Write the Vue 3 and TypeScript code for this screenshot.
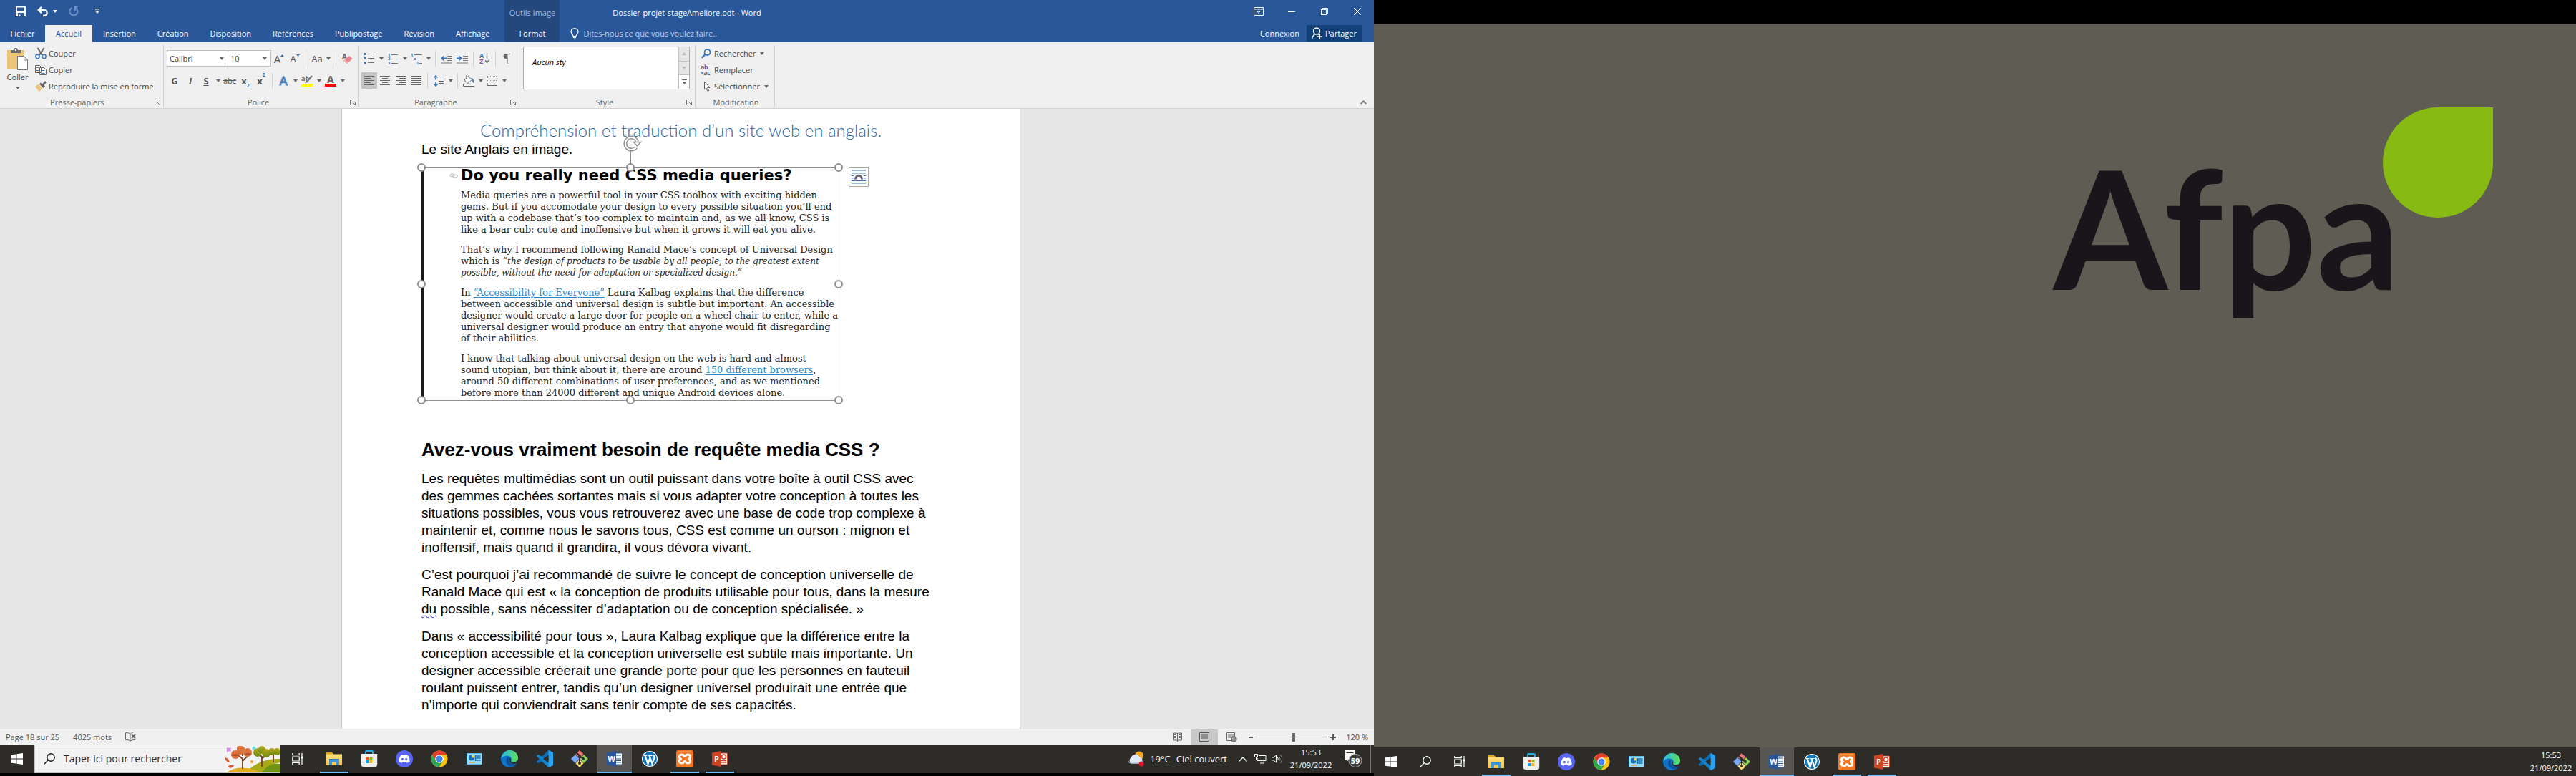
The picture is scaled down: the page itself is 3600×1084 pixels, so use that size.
<script setup lang="ts">
import { ref } from 'vue'

interface App { id: string; label: string; state?: 'open' | 'active'; letter?: string }

const tabs = ['Insertion', 'Création', 'Disposition', 'Références', 'Publipostage', 'Révision', 'Affichage']

const apps: App[] = [
  { id: 'explorer', label: 'Explorateur', state: 'open' },
  { id: 'store', label: 'Store' },
  { id: 'discord', label: 'Discord' },
  { id: 'chrome', label: 'Chrome' },
  { id: 'panel', label: 'Panneau' },
  { id: 'edge', label: 'Edge' },
  { id: 'vscode', label: 'Code' },
  { id: 'git', label: 'Git' },
  { id: 'word', label: 'Word', state: 'active', letter: 'W' },
  { id: 'wordpress', label: 'WordPress' },
  { id: 'xampp', label: 'XAMPP', state: 'open' },
  { id: 'ppt', label: 'PowerPoint', state: 'open', letter: 'P' },
]

const handles = ['nw', 'n', 'ne', 'w', 'e', 'sw', 's', 'se']

const firstParagraph = [
  'Les requêtes multimédias sont un outil puissant dans votre boîte à outil CSS avec',
  'des gemmes cachées sortantes mais si vous adapter votre conception à toutes les',
  'situations possibles, vous vous retrouverez avec une base de code trop complexe à',
  'maintenir et, comme nous le savons tous, CSS est comme un ourson : mignon et',
  'inoffensif, mais quand il grandira, il vous dévora vivant.',
]

const lastParagraph = [
  'Dans « accessibilité pour tous », Laura Kalbag explique que la différence entre la',
  'conception accessible et la conception universelle est subtile mais importante. Un',
  'designer accessible créerait une grande porte pour que les personnes en fauteuil',
  'roulant puissent entrer, tandis qu’un designer universel produirait une entrée que',
  'n’importe qui conviendrait sans tenir compte de ses capacités.',
]

const font = ref('Calibri')
const size = ref('10')
const zoom = ref(53)
</script>

<template>
  <div class="desktop">
    <svg class="defs" width="0" height="0" aria-hidden="true">
      <defs>
        <linearGradient id="gEdge" x1="0" y1="0" x2="1" y2="0"><stop offset="0" stop-color="#2bb7e8" /><stop offset="1" stop-color="#5be05a" /></linearGradient>
        <linearGradient id="gFold" x1="0" y1="0" x2="0" y2="1"><stop offset="0" stop-color="#ffdf7c" /><stop offset="1" stop-color="#f7c145" /></linearGradient>
        <linearGradient id="gLeaf" x1="0" y1="0" x2="0" y2="1"><stop offset="0" stop-color="#b9a81c" /><stop offset="1" stop-color="#6d8a12" /></linearGradient>
      </defs>
      <symbol id="win" viewBox="0 0 16 16"><path fill="#fff" d="M0 2.3 6.6 1.4V7.6H0zM7.4 1.3 16 0V7.6H7.4zM0 8.4H6.6V14.6L0 13.7zM7.4 8.4H16V16L7.4 14.7z" /></symbol>
      <symbol id="lens" viewBox="0 0 16 16"><g fill="none" stroke="currentColor" stroke-width="1.4"><circle cx="10" cy="6" r="5.2" /><path d="M6.2 9.8 .6 15.4" /></g></symbol>
      <symbol id="taskview" viewBox="0 0 16 16"><g fill="none" stroke="#fff" stroke-width="1.2"><path d="M.8 0v2.6H10.200V0M.8 16v-2.600H10.200V16M.8 5h9.400v6H.8zM14 0v16" /></g><path fill="#fff" d="M12.500 4.500h3v3h-3z" /></symbol>
      <symbol id="explorer" viewBox="0 0 24 24"><path fill="#e0a21b" d="M1 3h8l2 2v4H1z" /><path fill="url(#gFold)" d="M1 5.500h22V21H1z" /><path fill="#3e97d6" d="M5 12h14v9h-4v-4.500h-6V21H5z" /><path fill="#2378b8" d="M5 12h14v1.200H5z" /></symbol>
      <symbol id="store" viewBox="0 0 24 24"><path fill="none" stroke="#29a9e8" stroke-width="2" d="M7 6V2.200Q7 1 8.200 1h7.600Q17 1 17 2.200V6" /><path fill="#f0f0f0" d="M.8 5h22.400v15q0 3-3 3H3.800q-3 0-3-3z" /><path fill="#f25022" d="M7.500 9h4v4h-4z" /><path fill="#7fba00" d="M12.500 9h4v4h-4z" /><path fill="#00a4ef" d="M7.500 14h4v4h-4z" /><path fill="#ffb900" d="M12.500 14h4v4h-4z" /></symbol>
      <symbol id="discord" viewBox="0 0 24 24"><circle cx="12" cy="12" r="12" fill="#5865f2" /><path fill="#fff" d="M6.700 7.400q2-1.200 3.700-1.300l.5 1h2.200l.5-1q1.700.1 3.700 1.300 2.500 4 2.200 8.400-2 1.600-4 2l-1-1.700q-2.500.6-5 0l-1 1.700q-2-.4-4-2-.3-4.400 2.200-8.400z" /><ellipse cx="9.400" cy="12.500" rx="1.500" ry="1.800" fill="#5865f2" /><ellipse cx="14.600" cy="12.500" rx="1.500" ry="1.800" fill="#5865f2" /></symbol>
      <symbol id="chrome" viewBox="0 0 24 24"><circle cx="12" cy="12" r="11.500" fill="#fbc116" /><path fill="#e33b2e" d="M2 6.300A11.500 11.500 0 0 1 22 6.300H12L7.100 14.800z" /><path fill="#2da94f" d="M2 6.300A11.500 11.500 0 0 0 11.700 23.500L16.900 14.800H7.100z" /><circle cx="12" cy="12" r="5.700" fill="#fff" /><circle cx="12" cy="12" r="4.500" fill="#3f83ee" /></symbol>
      <symbol id="panel" viewBox="0 0 24 24"><path fill="#56bdf0" d="M1 4h22v16H1z" /><path fill="#9adcf9" d="M2 5h20v14H2z" /><circle cx="8" cy="10.500" r="4" fill="#1372b8" /><path fill="#ffd34d" d="M8 10.500V6.500a4 4 0 0 1 4 4z" /><g stroke="#1372b8" stroke-width="1.500"><path d="M14.500 8h6M14.500 11h6M14.500 14h6M13.500 7v8" /></g><path stroke="#e9a11b" stroke-width="1.500" d="M4 17h9" /></symbol>
      <symbol id="edge" viewBox="0 0 24 24"><circle cx="12" cy="12" r="12" fill="#0f74c9" /><path fill="url(#gEdge)" d="M1 8.500C3.500 2.500 8 0 12.500 0 19 0 24 5 24 10.500c0 4-3 6-6.500 6-3 0-4-1.300-3.500-2.500 2-3-.5-6.500-5-6.500C5 7.500 2 9.500.3 12z" /><path fill="#0a4f9e" d="M9 9.500c-4 4.500-1 12 5 12.700 3 .2 6-1.200 7.700-3.400-5 2-10.400-.5-11-5-.2-1.800.3-3 .8-3.800z" /><path fill="#2d2c29" d="M12.500 10.600c1.800 1 2.400 2 1.500 3.600-.4 1 .9 2.400 3.500 2.400 2 0 4-.7 5.300-2.100l1.700 0-.5 3.500-4.500 1c-4 .5-7.500-2-7.300-5.200z" /></symbol>
      <symbol id="vscode" viewBox="0 0 24 24"><path fill="#0d6cb4" d="M17.500 0 24 3v4L3 18 .5 16z" /><path fill="#1283cd" d="M.5 8 3 6l21 11v4l-6.500 3z" /><path fill="#2aa3f0" d="M17.500 0 24 3v18l-6.500 3z" /><path fill="#2d2c29" d="m17.500 6.500v11L10 12z" /></symbol>
      <symbol id="git" viewBox="0 0 24 24"><path fill="#f07a78" d="m12 0 5.500 5.500L12 11 6.500 5.500z" /><path fill="#7ba7f7" d="m6 6 5.500 5.500L6 18 0 12z" /><path fill="#8fd15c" d="m18 6 6 6-6 6-5.500-6z" /><path fill="#ffe37a" d="m12 12.500 5.500 6L12 24l-5.500-5.500z" /><path stroke="#2d2c29" stroke-width="2" fill="none" d="M8 3.500 12 8v10M12 8l5 4" /><circle cx="12" cy="8" r="2" fill="#2d2c29" /><circle cx="12" cy="18" r="2" fill="#2d2c29" /><circle cx="17" cy="12" r="2" fill="#2d2c29" /></symbol>
      <symbol id="word" viewBox="0 0 24 24"><path fill="#fff" stroke="#2a5699" d="M11 4h11.500v16H11z" /><path stroke="#2a5699" stroke-width="1.200" d="M13 7h8M13 9.500h8M13 12h8M13 14.500h8M13 17h8" /><path fill="#2a5699" d="M1 3.500 14 1v22L1 20.500z" /></symbol>
      <symbol id="ppt" viewBox="0 0 24 24"><path fill="#fff" stroke="#d04423" d="M11 4h11.500v16H11z" /><circle cx="17.500" cy="9" r="3" fill="none" stroke="#d04423" stroke-width="1.500" /><path stroke="#d04423" stroke-width="1.300" d="M14 14.500h7M14 17h7" /><path fill="#d04423" d="M1 3.500 14 1v22L1 20.500z" /></symbol>
      <symbol id="wordpress" viewBox="0 0 24 24"><circle cx="12" cy="12" r="11" fill="#fff" /><circle cx="12" cy="12" r="10" fill="#0f74b8" /><path fill="none" stroke="#fff" stroke-width="2.200" d="M5.500 7.500 9.500 19l3-9-1-2.500M12 9l3.500 10 3-8.500q.3-2-1.500-4" /><path stroke="#fff" stroke-width="1.200" d="M3.500 7.500h5M10 7.500h5.500" /></symbol>
      <symbol id="xampp" viewBox="0 0 24 24"><rect width="24" height="24" rx="2.500" fill="#f37623" /><path fill="#f9a468" d="M3 1.500h18v1.500H3z" /><path fill="none" stroke="#fff" stroke-width="3" stroke-linejoin="round" d="M8.500 6C3 6 4 11 6.500 12 4 13 3 18 8.500 18c2.500 0 1.500-2.500 3.500-2.500s1 2.500 3.500 2.500c5.500 0 4.500-5 2-6 2.500-1 3.500-6-2-6-2.500 0-1.500 2.500-3.500 2.500S11 6 8.500 6z" /></symbol>
    </svg>

    <section class="screen left">
      <div class="window">
        <header class="titlebar">
          <div class="qat">
            <button class="tool" aria-label="Enregistrer"><svg width="14" height="14" viewBox="0 0 14 14"><path fill="#fff" fill-rule="evenodd" d="M0 0h14v14H0zM2 1.500v5h10v-5zM3 9v5h2v-2.500h1.500V14H11V9z" /></svg></button>
            <button class="tool split" aria-label="Annuler"><svg width="15" height="14" viewBox="0 0 15 14"><path fill="none" stroke="#fff" stroke-width="2.400" d="M6 .8 1.800 5 6 9.200M2 5h7.500c5.500 0 5.500 8 0 8H8" /></svg><i class="caret light"></i></button>
            <button class="tool" aria-label="Rétablir"><svg width="14" height="14" viewBox="0 0 14 14"><path fill="none" stroke="#6f90c2" stroke-width="2" d="M4.500 1.800A5.600 5.600 0 1 0 10 2.200M8 .8h4.500M9 1v5" /></svg></button>
            <button class="tool" aria-label="Personnaliser"><svg width="6" height="8" viewBox="0 0 6 8"><path fill="#fff" d="M0 0h6v1.500H0zM0 3.500h6L3 7z" /></svg></button>
          </div>
          <h1 class="doc-title">Dossier-projet-stageAmeliore.odt - Word</h1>
          <div class="win-btns">
            <button aria-label="Options du ruban"><svg width="14" height="12" viewBox="0 0 14 12"><path fill="none" stroke="#fff" d="M.5.500h13v11H.5zM.5 3h13M7 10V5M5 7l2-2 2 2" /></svg></button>
            <button aria-label="Réduire"><svg width="10" height="12" viewBox="0 0 10 12"><path stroke="#fff" d="M0 6.500h10" /></svg></button>
            <button aria-label="Restaurer"><svg width="10" height="12" viewBox="0 0 10 12"><path fill="none" stroke="#fff" d="M.5 3.500h7v7h-7zM2.500 3.500v-2h7v7h-2" /></svg></button>
            <button aria-label="Fermer"><svg width="10" height="12" viewBox="0 0 10 12"><path fill="none" stroke="#fff" d="m0 1 10 10M10 1 0 11" /></svg></button>
          </div>
        </header>

        <nav class="tabs">
          <button class="tab file">Fichier</button>
          <button class="tab on">Accueil</button>
          <button v-for="t in tabs" :key="t" class="tab">{{ t }}</button>
          <div class="context"><span>Outils Image</span><button class="tab">Format</button></div>
          <label class="tell"><svg width="12" height="16" viewBox="0 0 12 16"><path fill="none" stroke="#fff" stroke-width="1.200" d="M4 11.500C4 9 1 8.500 1 5.500a5 5 0 0 1 10 0c0 3-3 3.500-3 6zM4 13.500h4M4.500 15.300h3" /></svg><input type="text" aria-label="Rechercher une commande" placeholder="Dites-nous ce que vous voulez faire.." /></label>
          <button class="tab connect">Connexion</button>
          <button class="share"><svg width="15" height="17" viewBox="0 0 15 17"><g fill="none" stroke="#fff" stroke-width="1.400"><circle cx="7" cy="5.500" r="4.500" /><path d="M.7 16.500c0-3.500 1.500-5.500 4-6.700M9 9l1 1.500M7.500 13H15M11.300 9.500v7" /></g></svg>Partager</button>
        </nav>

        <div class="ribbon">
          <section class="group clip">
            <div class="body row">
              <button class="paste">
                <svg width="29" height="31" viewBox="0 0 29 31"><path fill="#edc57a" d="M0 3h24v26H0z" /><path fill="#6a6a6a" d="M5 7V3h4q0-3 3-3t3 3h4v4z" /><circle cx="12" cy="3" r="1.200" fill="#fff" /><path fill="#fff" stroke="#777" d="M14.500 11.500h9l5 5.500v13.500h-14zM23.500 11.500V17h5" /></svg>
                <span>Coller</span><i class="caret"></i>
              </button>
              <div class="stack">
                <button class="cmd"><svg width="16" height="16" viewBox="0 0 16 16"><path stroke="#666" stroke-width="2" d="M3.500 0 10 10M12.500 0 6 10" /><g fill="none" stroke="#3a75b8" stroke-width="1.400"><circle cx="3.500" cy="12" r="2.700" /><circle cx="12.500" cy="12" r="2.700" /></g></svg>Couper</button>
                <button class="cmd"><svg width="16" height="16" viewBox="0 0 16 16"><g fill="#fff" stroke="#666"><path d="M.5 1.500h6l2 2v8h-8zM6.500 4.500h6l3 3v7h-9z" /></g><path stroke="#3a75b8" d="M2 4.500h3M2 6.500h3M2 8.500h3M8.500 8.500h5M8.500 10.500h5M8.500 12.500h5" /></svg>Copier</button>
                <button class="cmd"><svg width="16" height="16" viewBox="0 0 16 16"><path fill="#edc57a" d="M0 8 5 4.500l5 6L6 15z" /><path fill="#666" d="M6 4.500 8 2.500l2 2L14 0l2 2-3.500 4 1.500 1.500-2.500 2.500z" /></svg>Reproduire la mise en forme</button>
              </div>
            </div>
            <footer><span>Presse-papiers</span><svg class="launch" viewBox="0 0 8 8"><path fill="none" stroke="#777" d="M.5 7V.5H7M3 3l4 4M7.500 3.500v4h-4" /></svg></footer>
          </section>

          <section class="group police">
            <div class="body rows">
              <div class="row">
                <label class="combo wide"><select v-model="font" aria-label="Police"><option>Calibri</option></select><i class="caret"></i></label>
                <label class="combo"><select v-model="size" aria-label="Taille"><option>10</option></select><i class="caret"></i></label>
                <button class="tool big">A<svg width="5" height="12" viewBox="0 0 5 12"><path fill="#3a75b8" d="M0 3h5L2.500 0z" /></svg></button>
                <button class="tool">A<svg width="5" height="12" viewBox="0 0 5 12"><path fill="#3a75b8" d="M0 0h5L2.500 3z" /></svg></button>
                <i class="sep"></i>
                <button class="tool split">Aa<i class="caret"></i></button>
                <i class="sep"></i>
                <button class="tool" aria-label="Effacer"><svg width="15" height="16" viewBox="0 0 15 16"><text x="0" y="9" font-size="10" class="glyph" fill="#666">A</text><path fill="#e8848f" d="m2 11 8-7 4.500 4-7.500 7z" /><path fill="#f4b6bc" d="m2 11 2-1.700 5 4L7 15z" /></svg></button>
              </div>
              <div class="row">
                <button class="tool b">G</button>
                <button class="tool b it">I</button>
                <button class="tool b un">S</button><i class="drop"><i class="caret"></i></i>
                <button class="tool st">abc</button>
                <button class="tool b">x<sub>2</sub></button>
                <button class="tool b">x<sup>2</sup></button>
                <i class="sep"></i>
                <button class="tool glow">A</button><i class="drop"><i class="caret"></i></i>
                <button class="tool" aria-label="Surlignage"><svg width="16" height="17" viewBox="0 0 16 17"><text x="0" y="9" font-size="9" class="glyph" fill="#666">ab</text><path stroke="#777" stroke-width="2.500" d="M15 2 8 10" /><path fill="#777" d="m5 12 2-4 3 3z" /><path fill="#ff0" d="M0 13h16v4H0z" /></svg></button><i class="drop"><i class="caret"></i></i>
                <button class="tool" aria-label="Couleur"><svg width="16" height="17" viewBox="0 0 16 17"><text x="3" y="12" font-size="14" class="glyph" fill="#666">A</text><path fill="#f00" d="M0 13h16v4H0z" /></svg></button><i class="drop"><i class="caret"></i></i>
              </div>
            </div>
            <footer><span>Police</span><svg class="launch" viewBox="0 0 8 8"><path fill="none" stroke="#777" d="M.5 7V.5H7M3 3l4 4M7.500 3.500v4h-4" /></svg></footer>
          </section>

          <section class="group para">
            <div class="body rows">
              <div class="row">
                <button class="tool" aria-label="Puces"><svg width="14" height="15" viewBox="0 0 14 15"><path stroke="#777" d="M5 1.500h9M5 7.500h9M5 13.500h9" /><path fill="#3a75b8" d="M0 0h3v3H0zM0 6h3v3H0zM0 12h3v3H0z" /></svg></button><i class="drop"><i class="caret"></i></i>
                <button class="tool" aria-label="Numérotation"><svg width="14" height="16" viewBox="0 0 14 16"><path stroke="#777" d="M5 2.500h9M5 8.500h9M5 14.500h9" /><g font-size="6" class="glyph" fill="#3a75b8"><text y="5">1</text><text y="10">2</text><text y="16">3</text></g></svg></button><i class="drop"><i class="caret"></i></i>
                <button class="tool" aria-label="Liste à plusieurs niveaux"><svg width="16" height="16" viewBox="0 0 16 16"><path stroke="#777" d="M5 2.500h11M9 8.500h7M12 14.500h4" /><g font-size="6" class="glyph" fill="#3a75b8"><text y="5">1</text><text x="4" y="10">a</text><text x="9" y="16">i</text></g></svg></button><i class="drop"><i class="caret"></i></i>
                <i class="sep"></i>
                <button class="tool" aria-label="Diminuer le retrait"><svg width="16" height="14" viewBox="0 0 16 14"><path stroke="#777" d="M0 .5h16M9 3.500h7M9 6.500h7M9 9.500h7M0 13h16" /><path fill="#3a75b8" d="M0 6.500 4 3v2.500h4v2H4V10z" /></svg></button>
                <button class="tool" aria-label="Augmenter le retrait"><svg width="16" height="14" viewBox="0 0 16 14"><path stroke="#777" d="M0 .5h16M9 3.500h7M9 6.500h7M9 9.500h7M0 13h16" /><path fill="#3a75b8" d="M8 6.500 4 3v2.500H0v2h4V10z" /></svg></button>
                <i class="sep"></i>
                <button class="tool" aria-label="Trier"><svg width="14" height="17" viewBox="0 0 14 17"><text y="8" font-size="9" class="glyph" fill="#3a75b8">A</text><text y="16" font-size="9" class="glyph" fill="#8a4fa8">Z</text><path fill="none" stroke="#666" stroke-width="1.300" d="M10.500 1v13M8 11.500l2.500 3 2.500-3" /></svg></button>
                <i class="sep"></i>
                <button class="tool" aria-label="Afficher tout"><svg width="10" height="14" viewBox="0 0 10 14"><path fill="#666" d="M4 0h6v1H9v13H8V1H6.500v13h-1V7H4A3.500 3.500 0 0 1 4 0z" /></svg></button>
              </div>
              <div class="row">
                <button class="tool picked" aria-label="Gauche"><svg width="14" height="13" viewBox="0 0 14 13"><path stroke="#666" d="M0 .5h14M0 3.500h9M0 6.500h14M0 9.500h9M0 12.500h14" /></svg></button>
                <button class="tool" aria-label="Centrer"><svg width="14" height="13" viewBox="0 0 14 13"><path stroke="#666" d="M0 .5h14M3 3.500h8M0 6.500h14M3 9.500h8M0 12.500h14" /></svg></button>
                <button class="tool" aria-label="Droite"><svg width="14" height="13" viewBox="0 0 14 13"><path stroke="#666" d="M0 .5h14M5 3.500h9M0 6.500h14M5 9.500h9M0 12.500h14" /></svg></button>
                <button class="tool" aria-label="Justifier"><svg width="14" height="13" viewBox="0 0 14 13"><path stroke="#666" d="M0 .5h14M0 3.500h14M0 6.500h14M0 9.500h14M0 12.500h14" /></svg></button>
                <i class="sep"></i>
                <button class="tool" aria-label="Interligne"><svg width="14" height="16" viewBox="0 0 14 16"><path stroke="#666" d="M7 2.500h7M7 5.500h7M7 8.500h7M7 11.500h7" /><path fill="none" stroke="#3a75b8" stroke-width="1.500" d="M3 1v5.500M3 15V9.500M.5 3.500 3 1l2.500 2.500M.5 12.500 3 15l2.500-2.500" /></svg></button><i class="drop"><i class="caret"></i></i>
                <i class="sep"></i>
                <button class="tool" aria-label="Trame de fond"><svg width="16" height="16" viewBox="0 0 16 16"><path fill="#fff" stroke="#666" d="m7 1.500 5.500 5L7 11.500 2 7zM5 4V0M.5 12.500h15v3H.5z" /><path fill="#3a75b8" d="M11 4q5 0 4 7-2-1-2-4z" /></svg></button><i class="drop"><i class="caret"></i></i>
                <button class="tool" aria-label="Bordures"><svg width="14" height="14" viewBox="0 0 14 14"><path fill="none" stroke="#a78fb0" stroke-dasharray="1 1" d="M.5 0v13M6.500 0v13M13.500 0v13M0 .5h14M0 6.500h14" /><path stroke="#666" d="M0 13.500h14" /></svg></button><i class="drop"><i class="caret"></i></i>
              </div>
            </div>
            <footer><span>Paragraphe</span><svg class="launch" viewBox="0 0 8 8"><path fill="none" stroke="#777" d="M.5 7V.5H7M3 3l4 4M7.500 3.500v4h-4" /></svg></footer>
          </section>

          <section class="group styles">
            <div class="body">
              <div class="gallery">
                <button class="style-item">Aucun sty</button>
                <div class="scroll">
                  <button aria-label="Monter"><svg width="6" height="4" viewBox="0 0 6 4"><path fill="#bbb" d="M0 4h6L3 0z" /></svg></button>
                  <button aria-label="Descendre"><svg width="6" height="4" viewBox="0 0 6 4"><path fill="#bbb" d="M0 0h6L3 4z" /></svg></button>
                  <button class="more" aria-label="Autres"><svg width="7" height="7" viewBox="0 0 7 7"><path fill="#666" d="M0 0h7v1H0zM.5 3h6l-3 4z" /></svg></button>
                </div>
              </div>
            </div>
            <footer><span>Style</span><svg class="launch" viewBox="0 0 8 8"><path fill="none" stroke="#777" d="M.5 7V.5H7M3 3l4 4M7.500 3.500v4h-4" /></svg></footer>
          </section>

          <section class="group modif">
            <div class="body stack">
              <button class="cmd"><svg width="14" height="14" viewBox="0 0 14 14"><circle cx="8.500" cy="5" r="4" fill="#fff" stroke="#3a75b8" stroke-width="1.800" /><path stroke="#3a75b8" stroke-width="2.500" d="M5.500 8 .8 12.800" /></svg>Rechercher<i class="caret"></i></button>
              <button class="cmd"><svg width="16" height="16" viewBox="0 0 16 16"><g font-size="9" class="glyph"><text x="0" y="7" fill="#666">a</text><text x="5" y="7" fill="#8a4fa8">b</text><text x="4" y="15" fill="#666">a</text><text x="9" y="15" fill="#3a75b8">c</text></g><path fill="none" stroke="#3a75b8" d="M.5 9v3h3M2 10.500 3.500 12 2 13.500" /></svg>Remplacer</button>
              <button class="cmd"><svg width="14" height="16" viewBox="0 0 14 16"><path fill="#fff" stroke="#666" d="M4.500 1v11l2.500-2 2 4.500 1.700-.8-2-4.200H12z" /></svg>Sélectionner<i class="caret"></i></button>
            </div>
            <footer><span>Modification</span></footer>
          </section>
          <button class="fold" aria-label="Réduire le ruban"><svg width="9" height="6" viewBox="0 0 9 6"><path fill="none" stroke="#777" stroke-width="2" d="m.8 5 3.700-3.700L8.200 5" /></svg></button>
        </div>

        <main class="canvas">
          <article class="page">
            <h2 class="chapter">Compréhension et traduction d’un site web en anglais.</h2>
            <p class="lead">Le site Anglais en image.</p>

            <figure class="picture">
              <div class="shot">
                <h3><svg width="12" height="7" viewBox="0 0 12 7"><g fill="none" stroke="#bbb"><ellipse cx="4" cy="3" rx="3.500" ry="2" /><ellipse cx="8" cy="4" rx="3.500" ry="2" /></g></svg>Do you really need CSS media queries?</h3>
                <p>Media queries are a powerful tool in your CSS toolbox with exciting hidden<br />gems. But if you accomodate your design to every possible situation you’ll end<br />up with a codebase that’s too complex to maintain and, as we all know, CSS is<br />like a bear cub: cute and inoffensive but when it grows it will eat you alive.</p>
                <p>That’s why I recommend following Ranald Mace’s concept of Universal Design<br />which is “<em>the design of products to be usable by all people, to the greatest extent<br />possible, without the need for adaptation or specialized design.”</em></p>
                <p>In <a href="#">“Accessibility for Everyone”</a> Laura Kalbag explains that the difference<br />between accessible and universal design is subtle but important. An accessible<br />designer would create a large door for people on a wheel chair to enter, while a<br />universal designer would produce an entry that anyone would fit disregarding<br />of their abilities.</p>
                <p>I know that talking about universal design on the web is hard and almost<br />sound utopian, but think about it, there are around <a href="#">150 different browsers</a>,<br />around 50 different combinations of user preferences, and as we mentioned<br />before more than 24000 different and unique Android devices alone.</p>
              </div>
              <span class="stem"></span>
              <svg class="rotate" viewBox="0 0 26 22"><g fill="none" stroke="#8f8f8f"><path stroke-width="5" d="M18 17A8.500 8.500 0 1 1 19.500 9" /><path stroke="#fff" stroke-width="2" d="M18 17A8.500 8.500 0 1 1 19.500 9" /><path fill="#fff" stroke-width="1.500" d="M14.500 9.500h10L19.500 15z" /></g></svg>
              <span v-for="h in handles" :key="h" class="handle" :class="h"></span>
              <button class="layout" aria-label="Options de disposition"><svg width="20" height="20" viewBox="0 0 20 20"><path stroke="#3a75b8" stroke-width="1.200" d="M0 1h20M0 5h20M0 8.500h3M17 8.500h3M0 12h3M17 12h3M0 15.500h20M0 19h20" /><path fill="none" stroke="#fff" stroke-width="6" d="M5.500 14c0-7 9-7 9 0" /><path fill="none" stroke="#666" stroke-width="2.800" d="M5.500 13.500c0-7 9-7 9 0" /></svg></button>
            </figure>

            <h2 class="sub">Avez-vous vraiment besoin de requête media CSS ?</h2>
            <p class="text"><span v-for="line in firstParagraph" :key="line">{{ line }}</span></p>
            <p class="text">
              <span>C’est pourquoi j’ai recommandé de suivre le concept de conception universelle de</span>
              <span>Ranald Mace qui est « la conception de produits utilisable pour tous, dans la mesure</span>
              <span><u>du</u> possible, sans nécessiter d’adaptation ou de conception spécialisée. »</span>
            </p>
            <p class="text"><span v-for="line in lastParagraph" :key="line">{{ line }}</span></p>
          </article>
        </main>

        <footer class="status">
          <span>Page 18 sur 25</span><span>4025 mots</span>
          <svg width="15" height="13" viewBox="0 0 15 13"><path fill="none" stroke="#666" d="M7 2.500C6 1 4 .5.500.500v10C4 10.500 6 11 7 12.500V2.500c1-1.500 2-2 4-2M7 12.500c1-1.500 3-2 7-2" /><path stroke="#555" stroke-width="1.800" d="m9 3 5 5.500M14 3 9 8.500" /></svg>
          <div class="views">
            <button aria-label="Lecture"><svg width="13" height="13" viewBox="0 0 13 13"><path fill="none" stroke="#666" d="M.5 1h5l1 1 1-1h5v10h-5l-1 1-1-1h-5zM6.500 1v12M2 3.500h3M2 5.500h3M2 7.500h3M8 3.500h3M8 5.500h3M8 7.500h3" /></svg></button>
            <button class="sel" aria-label="Page"><svg width="14" height="13" viewBox="0 0 14 13"><path fill="none" stroke="#555" d="M.5.500h13v12H.5zM2 3h10M2 5h10M2 7h10M2 9h10" /></svg></button>
            <button aria-label="Web"><svg width="15" height="14" viewBox="0 0 15 14"><path fill="none" stroke="#666" d="M11.500 6V.5H.5v11h6M2 3h8M2 5h8M2 7h5" /><circle cx="10.500" cy="9.500" r="3.800" fill="#888" stroke="#666" /><path stroke="#fff" d="m8.500 8.500 2 1.500v2" fill="none" /></svg></button>
            <button class="step" aria-label="Zoom arrière"><svg width="8" height="8" viewBox="0 0 8 8"><path stroke="#555" stroke-width="2" d="M1 4h6" /></svg></button>
            <input v-model="zoom" type="range" aria-label="Zoom" />
            <button class="step" aria-label="Zoom avant"><svg width="8" height="8" viewBox="0 0 8 8"><path stroke="#555" stroke-width="2" d="M0 4h8M4 0v8" /></svg></button>
            <button class="pct">120 %</button>
          </div>
        </footer>
      </div>

      <div class="taskbar">
        <button class="sys" aria-label="Démarrer"><svg width="16" height="16"><use href="#win" /></svg></button>
        <label class="search">
          <svg width="16" height="16"><use href="#lens" /></svg>
          <input type="text" aria-label="Rechercher" placeholder="Taper ici pour rechercher" />
          <svg width="78" height="38" viewBox="0 0 78 38">
            <path fill="#6f9412" d="M44 38q10-14 34-12v12z" /><path fill="#d9a514" d="M3 38Q22 25 44 38z" /><path fill="#a8a916" d="M30 38q18-20 48-19v5Q60 26 52 38z" />
            <path fill="#e0b01a" d="M4 38q20-11 40-3l3 3z" />
            <g fill="none" stroke="#7b4a28" stroke-width="2"><path d="M25 33V19l-7-6M25 22l8-8M25 15V8M52 30V16l-6-5M52 19l6-6M68 24V13" /></g>
            <g fill="#d9713a"><circle cx="15" cy="13" r="6" /><circle cx="23" cy="7" r="6" /><circle cx="32" cy="10" r="6" /><circle cx="20" cy="4" r="3" /></g>
            <path fill="#b9502c" d="M9 15q6-6 12 0zM27 13q6-5 11 0z" />
            <g fill="url(#gLeaf)"><circle cx="46" cy="10" r="6" /><circle cx="52" cy="6" r="5" /><circle cx="58" cy="11" r="6" /><circle cx="66" cy="9" r="5" /><circle cx="73" cy="9" r="5" /></g>
            <path fill="#e37bf5" d="m3 3 3 1 3-1-1 3 1 3-3-1-3 2 0-4z" /><circle cx="41" cy="4" r="2.500" fill="#64dcec" /><circle cx="38" cy="23" r="2" fill="#f6a50e" />
            <path fill="#e2561e" d="M0 17q6 1 7 7-6-1-7-7zM4 30q5-4 9-1-4 5-9 1z" />
          </svg>
        </label>
        <button class="sys" aria-label="Vue des tâches"><svg width="16" height="16"><use href="#taskview" /></svg></button>
        <div class="pins">
          <button v-for="a in apps" :key="a.id" class="pin" :class="a.state" :aria-label="a.label"><svg width="24" height="24"><use :href="'#' + a.id" /></svg><b v-if="a.letter">{{ a.letter }}</b></button>
        </div>
        <div class="tray">
          <button class="weather"><svg width="23" height="22" viewBox="0 0 23 22"><circle cx="16" cy="6.500" r="6" fill="#f5a623" /><path fill="#dfe9f7" d="M5 17.500a5 5 0 0 1 0-8.500 6 6 0 0 1 11-1 5 5 0 0 1 1.500 9.500z" /><path fill="#b8ccea" d="M1 14q4 3 20 0-1 3.500-4 3.500H5q-3 0-4-3.500z" /><circle cx="19" cy="18" r="3.500" fill="#e3122d" /></svg><span>19°C</span><span>Ciel couvert</span></button>
          <button class="mini" aria-label="Icônes cachées"><svg width="12" height="7" viewBox="0 0 12 7"><path fill="none" stroke="#fff" stroke-width="1.300" d="m.5 6.500 5.500-5.500 5.500 5.500" /></svg></button>
          <button class="mini" aria-label="Réseau"><svg width="17" height="14" viewBox="0 0 17 14"><path fill="none" stroke="#fff" d="M6 2.500h10v7H4V6M8 13h6M10.500 9.500V13M.5.500h4v4h-4zM2.500 4.500V9" /></svg></button>
          <button class="mini" aria-label="Son"><svg width="16" height="14" viewBox="0 0 16 14"><path fill="none" stroke="#fff" d="M.5 5v4H3l3.500 3V2L3 5zM8.500 5q1.500 2 0 4" /><path fill="none" stroke="#999" d="M10.500 3.500q3 3.500 0 7M12.500 1.500q4.500 5.500 0 11" /></svg></button>
          <button class="clock"><span>15:53</span><span>21/09/2022</span></button>
          <button class="sys note"><svg width="26" height="26" viewBox="0 0 26 26"><path fill="#fff" d="M1 1h15v13H7l-3 3v-3H1z" /><path stroke="#2d2c29" d="M3.500 4.500h10M3.500 7.500h10M3.500 10.500h6" /><circle cx="16" cy="15.500" r="9" fill="#3b3a38" stroke="#aaa" /><text x="16" y="20" font-size="11" text-anchor="middle" class="glyph" fill="#fff">59</text></svg></button>
          <i class="peek"></i>
        </div>
      </div>
    </section>

    <section class="screen right">
      <div class="wallpaper">
        <div class="logo"><span class="brand">Afpa</span><i class="leaf"></i></div>
      </div>
      <div class="taskbar">
        <button class="sys" aria-label="Démarrer"><svg width="16" height="16"><use href="#win" /></svg></button>
        <button class="sys" aria-label="Rechercher"><svg width="16" height="16"><use href="#lens" /></svg></button>
        <button class="sys" aria-label="Vue des tâches"><svg width="16" height="16"><use href="#taskview" /></svg></button>
        <div class="pins">
          <button v-for="a in apps" :key="a.id" class="pin" :class="a.state" :aria-label="a.label"><svg width="24" height="24"><use :href="'#' + a.id" /></svg><b v-if="a.letter">{{ a.letter }}</b></button>
        </div>
        <div class="tray"><button class="clock"><span>15:53</span><span>21/09/2022</span></button></div>
      </div>
    </section>
  </div>
</template>

<style>
body { background: #000; }
.glyph { font-family: "Open Sans", sans-serif; font-weight: 700; }
</style>

<style scoped>
* { box-sizing: border-box; }
h1, h2, h3, p, figure { margin: 0; font-weight: 400; }
button, input, select { margin: 0; padding: 0; border: 0; background: none; font: inherit; color: inherit; outline: 0; }
svg { display: block; flex: none; overflow: visible; }
i { font-style: normal; }
.defs { position: absolute; }
.desktop { display: flex; min-height: 100vh; background: #000; font: 11px/16px "Open Sans", sans-serif; color: #444; }
.screen { display: flex; flex-direction: column; min-width: 0; }
.left { flex: 8; padding-bottom: 4px; }
.right { flex: 7; padding-top: 34px; }
.window { flex: 1; display: flex; flex-direction: column; background: #f0f0f0; }
.row { display: flex; align-items: center; }

.titlebar { display: grid; grid-template-columns: 1fr auto 1fr; align-items: center; height: 35px; background: #2a579a; color: #fff; }
.qat { display: flex; align-items: center; gap: 11px; padding: 0 0 4px 18px; }
.qat .tool { width: 22px; }
.doc-title { font-size: 11px; line-height: 16px; }
.win-btns { display: flex; justify-content: flex-end; padding-bottom: 4px; }
.win-btns button { width: 46px; display: flex; justify-content: center; }

.tabs { display: flex; height: 24px; background: #2a579a; color: #fff; line-height: 24px; }
.tab { flex: none; padding: 0 15px; white-space: nowrap; }
.tab.file { width: 63px; padding: 0; }
.tab.on { width: 66px; padding: 0; background: #f0f0f0; color: #2a579a; }
.context { display: flex; flex: none; flex-direction: column; width: 77px; margin: -35px 0 0 6px; background: #24477d; }
.context span { height: 35px; text-align: center; line-height: 36px; color: #a5b8d4; }
.tell { display: flex; align-items: center; gap: 6px; padding-left: 15px; flex: 1; }
.tell input { width: 260px; }
.tell input::placeholder { color: #c0cfe6; opacity: 1; }
.connect { padding: 0 10px; }
.share { display: flex; align-items: center; gap: 4px; height: 23px; width: 78px; padding-left: 7px; margin-right: 16px; background: #124078; }

.ribbon { display: flex; height: 93px; border-bottom: 1px solid #d2d2d2; }
.group { display: flex; flex-direction: column; margin: 4px 0 2px; border-right: 1px solid #d0d0d0; }
.group .body { flex: 1; }
.group footer { display: flex; align-items: center; height: 12px; color: #666; padding-right: 4px; }
.group footer span { flex: 1; text-align: center; }
.launch { width: 8px; height: 8px; }
.clip { width: 229px; }
.body.row { align-items: flex-start; }
.paste { display: flex; flex-direction: column; align-items: center; width: 49px; padding-top: 4px; }
.paste span { margin: 2px 0 5px; }
.stack { display: flex; flex-direction: column; }
.cmd { display: flex; align-items: center; gap: 3px; height: 23px; white-space: nowrap; }
.rows { display: flex; flex-direction: column; gap: 8px; padding-top: 7px; }
.rows .row { height: 23px; }
.police { width: 273px; padding-left: 4px; }
.para { width: 224px; padding-left: 3px; }
.styles { width: 246px; padding-left: 5px; }
.modif { width: 111px; padding-left: 7px; }
.modif .cmd svg { width: 16px; }
.modif .cmd .caret { margin-left: 3px; }
.combo { position: relative; display: flex; align-items: center; width: 61px; height: 23px; border: 1px solid #c0c0c0; background: #fff; }
.combo.wide { width: 86px; margin-right: -1px; }
.combo select { appearance: none; width: 100%; padding-left: 3px; }
.combo .caret { position: absolute; right: 5px; }
.caret { width: 0; border: 3px solid transparent; border-top: 4px solid #666; border-bottom: 0; flex: none; }
.caret.light { border-top-color: #fff; }
.drop { display: flex; justify-content: center; width: 11px; }
.sep { width: 1px; height: 22px; margin: 0 4px; background: #d2d2d2; }
.tool { display: flex; align-items: center; justify-content: center; width: 22px; height: 23px; color: #555; font-size: 13px; }
.tool.split { width: 33px; gap: 5px; }
.qat .tool.split { width: 30px; gap: 7px; }
.tool.big { font-size: 15px; }
.tool.b { font-weight: 700; }
.it { font-style: italic; }
.un { text-decoration: underline; }
.st { text-decoration: line-through; font-size: 11px; }
.tool sub, .tool sup { font-size: 7px; line-height: 8px; color: #3a75b8; }
.tool sub { align-self: flex-end; }
.tool sup { align-self: flex-start; }
.glow { color: #f0f0f0; font-size: 17px; -webkit-text-stroke: 1px #3a75b8; text-shadow: 0 0 3px #7fb0e6; }
.picked { background: #c5c5c5; }
.gallery { display: flex; height: 60px; margin: 2px 7px 0 0; border: 1px solid #ababab; background: #fff; }
.style-item { white-space: nowrap; padding-left: 12px; margin: 0 auto 16px 0; font-style: italic; color: #000; text-align: left; }
.scroll { display: flex; flex-direction: column; width: 15px; border-left: 1px solid #c0c0c0; }
.scroll button { flex: 1; display: flex; align-items: center; justify-content: center; background: #e6e6e6; border-bottom: 1px solid #c0c0c0; }
.scroll .more { background: #fff; border: 0; }
.fold { margin: auto 10px 5px auto; }

.canvas { flex: 1; display: flex; justify-content: center; padding-right: 17px; background: #e6e6e6; }
.page { width: 949px; padding: 15px 111px 0; background: #fff; border: solid #c6c6c6; border-width: 0 1px; color: #000; font-family: "Liberation Sans", Arial, sans-serif; }
.chapter { font: 300 24px/30px Lato, sans-serif; text-align: center; color: #1f68ae; white-space: nowrap; }
.lead { font-size: 19px; line-height: 24px; }
.picture { position: relative; width: 585px; margin: 12px 0 52px -1px; border: 1px solid #8f8f8f; }
.shot { margin: 2px 0; border-left: 3px solid #1a1a1a; padding-left: 52px; font: 13px/16px "DejaVu Serif", serif; color: #222; white-space: nowrap; }
.shot h3 { position: relative; font: 700 21px/18px "DejaVu Sans", sans-serif; color: #000; }
.shot h3 svg { position: absolute; left: -16px; top: 6px; }
.shot p { margin: 8px 0 0; }
.shot h3 + p { margin-top: 11px; }
.shot p + p { margin-top: 12px; }
.shot em { font-size: 12px; }
.shot a { color: #2b86c5; text-underline-offset: 2px; }
.handle { position: absolute; width: 12px; height: 12px; margin: -6px; border: 2px solid #8f8f8f; border-radius: 50%; background: #fff; }
.nw, .n, .ne { top: 0; }
.w, .e { top: 50%; }
.sw, .s, .se { top: 100%; }
.nw, .w, .sw { left: 0; }
.n, .s { left: 50%; }
.ne, .e, .se { left: 100%; }
.stem { position: absolute; left: 50%; top: -24px; height: 20px; border-left: 1px solid #8f8f8f; }
.rotate { position: absolute; left: 50%; top: -45px; width: 26px; height: 22px; margin-left: -10px; }
.layout { position: absolute; left: 100%; top: -1px; margin-left: 14px; display: flex; align-items: center; justify-content: center; width: 28px; height: 28px; border: 1px solid #ababab; background: #fff; }
.sub { font-weight: 700; font-size: 26px; line-height: 32px; margin-bottom: 13px; white-space: nowrap; }
.text { font-size: 19px; line-height: 24px; margin-bottom: 14px; }
.text span { display: block; white-space: nowrap; }
.text u { text-decoration: underline wavy #22f 1px; text-underline-offset: 2px; }

.status { display: flex; align-items: center; gap: 19px; height: 22px; padding-left: 8px; border-top: 1px solid #b8b8b8; color: #555; }
.views { display: flex; align-items: center; align-self: stretch; margin-left: auto; }
.views button { width: 38px; height: 21px; display: flex; align-items: center; justify-content: center; }
.views .sel { background: #c8c8c8; }
.views .step { width: 15px; }
.views .pct { width: 50px; justify-content: flex-end; padding-right: 8px; white-space: nowrap; }
input[type="range"] { appearance: none; width: 100px; height: 14px; background: linear-gradient(#999, #999) center / 100% 1px no-repeat; }
input[type="range"]::-webkit-slider-thumb { appearance: none; width: 4px; height: 12px; background: #666; }

.taskbar { display: flex; align-items: stretch; height: 40px; background: #2d2c29; color: #fff; }
.taskbar button { display: flex; align-items: center; justify-content: center; }
.sys { width: 48px; flex: none; }
.search { display: flex; align-items: center; width: 344px; padding-left: 12px; background: #f2f2f2; border: 1px solid #c4c4c4; border-right: 0; color: #1a1a1a; }
.search input { flex: 1; min-width: 0; padding-left: 12px; font-size: 14px; }
.search input::placeholder { color: #2a2a2a; opacity: 1; }
.pins { display: flex; gap: 1px; margin-left: 3px; }
.pin { position: relative; width: 48px; }
.pin b { position: absolute; left: 13px; width: 13px; text-align: center; }
.pin.active { background: #575654; }
.pin.open::after, .pin.active::after { content: ""; position: absolute; bottom: 0; left: 4px; right: 4px; height: 2px; background: #76b9ed; }
.pin.active::after { left: 0; right: 0; }
.tray { display: flex; margin-left: auto; }
.weather { gap: 8px; padding-right: 10px; font-size: 13px; white-space: nowrap; }
.mini { width: 24px; }
.taskbar .clock { width: 70px; flex-direction: column; line-height: 18px; }
.peek { width: 5px; border-left: 1px solid #777; }

.wallpaper { flex: 1; display: flex; justify-content: flex-end; align-items: flex-start; background: #5f5c54; padding: 116px 116px 0 0; }
.logo { display: flex; align-items: flex-start; }
.brand { font: 700 230px/272px Lato, sans-serif; color: #18161a; margin-top: 30px; }
.leaf { width: 154px; height: 154px; margin-left: -24px; border-radius: 50% 0 50% 50%; background: #88ba14; }
</style>
